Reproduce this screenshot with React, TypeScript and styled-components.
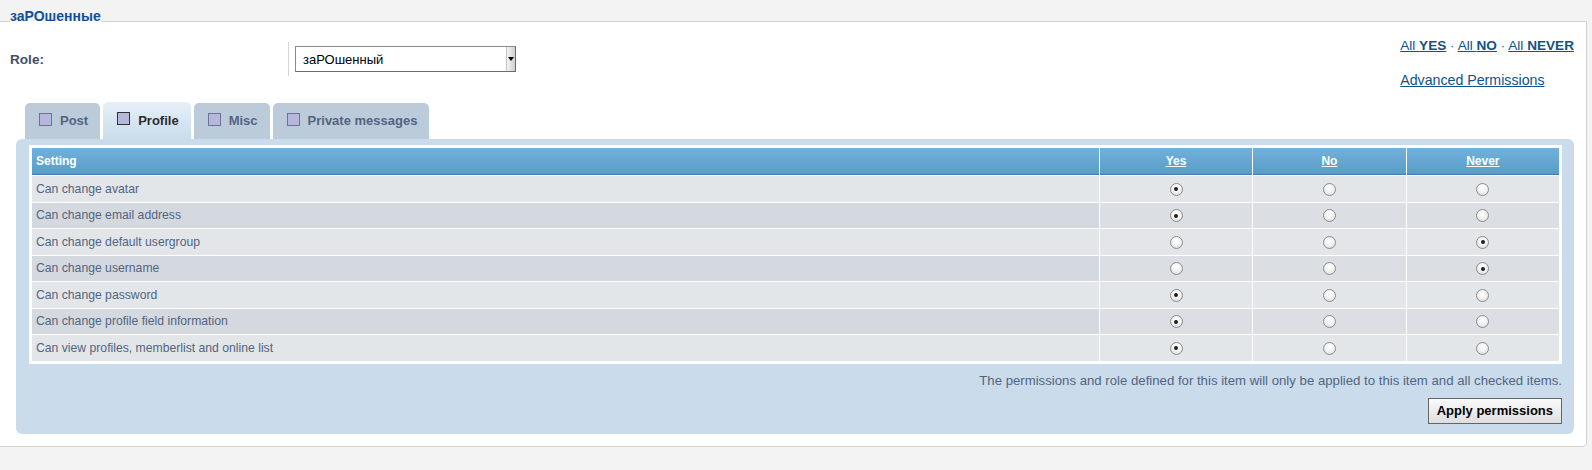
import React from 'react';
import styled, { createGlobalStyle } from 'styled-components';

const GlobalStyle = createGlobalStyle`
  html, body {
    margin: 0;
    background: #f3f3f3;
    font-family: "Liberation Sans", Arial, Helvetica, sans-serif;
  }
`;

const Page = styled.div`
  padding-top: 8px;
`;

const Panel = styled.fieldset`
  margin: 0 5px 0 -1px;
  padding: 0 12px 12px 10px;
  min-width: 0;
  border: 1px solid #d3d3d3;
  border-radius: 0 0 4px 0;
  background: #fff;
`;

const Legend = styled.legend`
  padding: 0 0 10px 0;
  font-size: 14px;
  line-height: 16px;
  font-weight: bold;
  color: #115098;
`;

const TopRow = styled.div`
  display: flex;
  justify-content: space-between;
  align-items: flex-start;
  margin-top: 4px;
`;

const RoleField = styled.div`
  display: flex;
  align-items: center;
  margin-top: 4px;
`;

const RoleLabel = styled.div`
  width: 278px;
  height: 34px;
  display: flex;
  align-items: center;
  border-right: 1px solid #d6d6d6;
  font-size: 13.6px;
  font-weight: bold;
  color: #425067;
`;

const Select = styled.div`
  display: flex;
  width: 221px;
  height: 26px;
  box-sizing: border-box;
  margin-left: 6px;
  border: 1px solid #8a8a8a;
  border-right-color: #6a6a6a;
  border-bottom-color: #6a6a6a;
  background: #fff;
`;

const SelectText = styled.span`
  flex: 1;
  display: flex;
  align-items: center;
  padding-left: 7px;
  font-size: 13px;
  color: #000;
`;

const SelectArrow = styled.span`
  width: 8px;
  display: flex;
  align-items: center;
  justify-content: center;
  background: linear-gradient(90deg, #f4f4f4, #cfcfcf);
  border-left: 1px solid #c4c4c4;

  &::after {
    content: '';
    border-left: 3px solid transparent;
    border-right: 3px solid transparent;
    border-top: 4px solid #000;
  }
`;

const QuickLinks = styled.div`
  line-height: 16px;
`;

const QuickLine = styled.div<{ $gap?: number; $size: number }>`
  margin-top: ${p => p.$gap || 0}px;
  font-size: ${p => p.$size}px;
  color: #536482;
`;

const Link = styled.a`
  color: #105289;
  text-decoration: underline;

  b {
    font-weight: bold;
  }
`;

const Section = styled.div`
  margin: 14px 0 0 6px;
`;

const Tabs = styled.div`
  display: flex;
  align-items: flex-end;
  padding-left: 9px;
`;

const Tab = styled.div<{ $active?: boolean }>`
  display: flex;
  align-items: center;
  gap: 8px;
  height: ${p => (p.$active ? 37 : 36)}px;
  box-sizing: border-box;
  margin-right: 3px;
  padding: 0 12px 1px 14px;
  border-radius: 5px 5px 0 0;
  background: ${p => (p.$active ? 'linear-gradient(#e6f0f8, #cadceb)' : '#bccbda')};
  font-size: 13px;
  font-weight: bold;
  color: ${p => (p.$active ? '#2d2d2d' : '#536482')};
`;

const TabBox = styled.span<{ $active?: boolean }>`
  width: 13px;
  height: 13px;
  box-sizing: border-box;
  margin-bottom: 3px;
  border: 1px solid ${p => (p.$active ? '#333' : '#6d7390')};
  background: #b5b8dc;
`;

const Box = styled.div`
  padding: 6px 12px 10px 13px;
  border-radius: 6px;
  background: #cadceb;
`;

const Table = styled.table`
  width: 100%;
  border-collapse: separate;
  border-spacing: 1px;
  border: 2px solid #fff;
  background: #fff;
  font-size: 12.2px;
`;

const Th = styled.th<{ $center?: boolean }>`
  height: 26px;
  padding: 0 4px;
  border-bottom: 1px solid #3f7fae;
  background: linear-gradient(#70b2da, #5a9cc9);
  color: #fff;
  font-size: 12px;
  font-weight: bold;
  text-align: ${p => (p.$center ? 'center' : 'left')};
  width: ${p => (p.$center ? '10%' : 'auto')};

  a {
    color: #fff;
    text-decoration: underline;
  }
`;

const Td = styled.td<{ $alt?: boolean; $center?: boolean }>`
  height: 25.5px;
  padding: 0 4px;
  color: #536482;
  text-align: ${p => (p.$center ? 'center' : 'left')};
  background: ${p => (p.$alt ? (p.$center ? '#dbdee2' : '#d4d9df') : '#e2e6e9')};
  vertical-align: middle;
`;

const Radio = styled.span<{ $checked?: boolean }>`
  display: inline-block;
  vertical-align: middle;
  position: relative;
  width: 13px;
  height: 13px;
  box-sizing: border-box;
  border-radius: 50%;
  border: 1px solid #8c8c8c;
  background: radial-gradient(circle at 50% 35%, #ffffff 0%, #f1f1f1 50%, #d4d4d4 100%);

  &::after {
    content: '';
    display: ${p => (p.$checked ? 'block' : 'none')};
    position: absolute;
    left: 3.5px;
    top: 3.5px;
    width: 4px;
    height: 4px;
    border-radius: 50%;
    background: #1e1e1e;
  }
`;

const Note = styled.p`
  margin: 9px 0 0;
  text-align: right;
  font-size: 13.2px;
  line-height: 15px;
  color: #536482;
`;

const Actions = styled.div`
  display: flex;
  justify-content: flex-end;
  margin-top: 10px;
`;

const Button = styled.button`
  height: 26px;
  padding: 0 8px;
  border: 1px solid #666;
  background: linear-gradient(#fbfbfb, #dedede);
  font-family: inherit;
  font-size: 13px;
  font-weight: bold;
  color: #000;
`;

type Choice = 'yes' | 'no' | 'never';

const settings: [string, Choice][] = [
  ['Can change avatar', 'yes'],
  ['Can change email address', 'yes'],
  ['Can change default usergroup', 'never'],
  ['Can change username', 'never'],
  ['Can change password', 'yes'],
  ['Can change profile field information', 'yes'],
  ['Can view profiles, memberlist and online list', 'yes'],
];

const tabs = ['Post', 'Profile', 'Misc', 'Private messages'];
const choices: Choice[] = ['yes', 'no', 'never'];

export default function App() {
  return (
    <Page>
      <GlobalStyle />
      <Panel>
        <Legend>заРОшенные</Legend>
        <TopRow>
          <RoleField>
            <RoleLabel>Role:</RoleLabel>
            <Select>
              <SelectText>заРОшенный</SelectText>
              <SelectArrow />
            </Select>
          </RoleField>
          <QuickLinks>
            <QuickLine $size={13.6}>
              <Link href="#">All <b>YES</b></Link> · <Link href="#">All <b>NO</b></Link> ·{' '}
              <Link href="#">All <b>NEVER</b></Link>
            </QuickLine>
            <QuickLine $gap={18} $size={14.2}>
              <Link href="#">Advanced Permissions</Link>
            </QuickLine>
          </QuickLinks>
        </TopRow>

        <Section>
          <Tabs>
            {tabs.map(t => (
              <Tab key={t} $active={t === 'Profile'}>
                <TabBox $active={t === 'Profile'} />
                {t}
              </Tab>
            ))}
          </Tabs>
          <Box>
            <Table>
              <thead>
                <tr>
                  <Th>Setting</Th>
                  <Th $center><a href="#">Yes</a></Th>
                  <Th $center><a href="#">No</a></Th>
                  <Th $center><a href="#">Never</a></Th>
                </tr>
              </thead>
              <tbody>
                {settings.map(([label, value], i) => (
                  <tr key={label}>
                    <Td $alt={i % 2 === 1}>{label}</Td>
                    {choices.map(c => (
                      <Td key={c} $alt={i % 2 === 1} $center>
                        <Radio $checked={value === c} />
                      </Td>
                    ))}
                  </tr>
                ))}
              </tbody>
            </Table>
            <Note>
              The permissions and role defined for this item will only be applied to this item and all checked items.
            </Note>
            <Actions>
              <Button>Apply permissions</Button>
            </Actions>
          </Box>
        </Section>
      </Panel>
    </Page>
  );
}
